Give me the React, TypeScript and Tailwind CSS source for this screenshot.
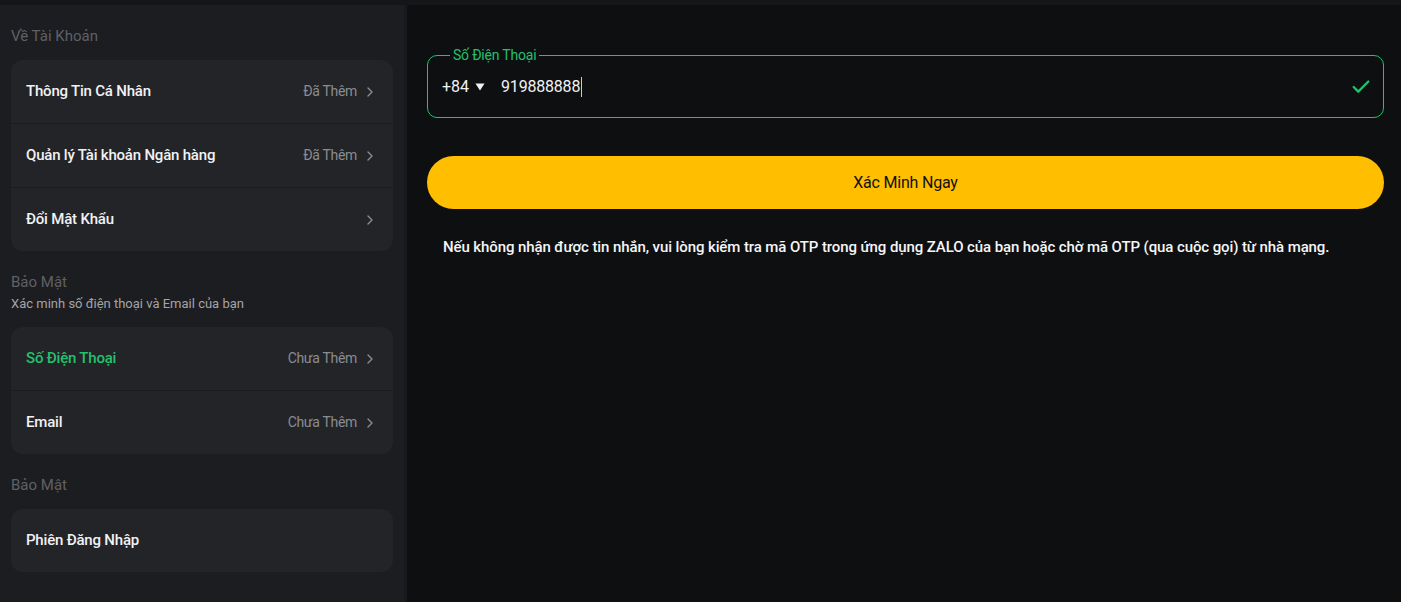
import { ChevronRight, Check } from 'lucide-react'

interface RowItem {
  label: string
  status?: string
  active?: boolean
  chevron?: boolean
}

function Section({ title, subtitle, rows }: { title: string; subtitle?: string; rows: RowItem[] }) {
  return (
    <div>
      <div className="px-[11px] pb-[14px]">
        <div className="text-[15px] leading-[20px] text-[#5f6065]">{title}</div>
        {subtitle && <div className="text-[13px] leading-[18px] text-[#a3a4a8] mt-[3px]">{subtitle}</div>}
      </div>
      <div className="mx-[11px] rounded-[12px] bg-[#232428] overflow-hidden">
        {rows.map((row, idx) => (
          <div
            key={row.label}
            className={`flex items-center pl-[15px] pr-[15px] ${idx > 0 ? 'h-[64px] border-t border-[#1b1c1f]' : 'h-[63px]'}`}
          >
            <span className={`flex-1 text-[15px] font-medium tracking-[-0.2px] ${row.active ? 'text-[#22c16c]' : 'text-[#f1f2f4]'}`}>
              {row.label}
            </span>
            {row.status && <span className="text-[14px] text-[#8b8c91] tracking-[-0.3px] mr-[5px]">{row.status}</span>}
            {row.chevron && <ChevronRight size={16} strokeWidth={2} className="text-[#8b8c91]" />}
          </div>
        ))}
      </div>
    </div>
  )
}

export default function App() {
  return (
    <div className="w-[1401px] h-[602px] flex flex-col bg-[#0e0f11] overflow-hidden" style={{ fontFamily: 'Roboto, "Noto Sans", sans-serif' }}>
      <div className="h-[5px] bg-[#151618] shrink-0" />
      <div className="flex flex-1 min-h-0">
        {/* Sidebar */}
        <div className="w-[404px] bg-[#1c1d20] pt-[21px] shrink-0 flex flex-col">
          <Section
            title="Về Tài Khoản"
            rows={[
              { label: 'Thông Tin Cá Nhân', status: 'Đã Thêm', chevron: true },
              { label: 'Quản lý Tài khoản Ngân hàng', status: 'Đã Thêm', chevron: true },
              { label: 'Đổi Mật Khẩu', chevron: true },
            ]}
          />
          <div className="h-[21px]" />
          <Section
            title="Bảo Mật"
            subtitle="Xác minh số điện thoại và Email của bạn"
            rows={[
              { label: 'Số Điện Thoại', status: 'Chưa Thêm', active: true, chevron: true },
              { label: 'Email', status: 'Chưa Thêm', chevron: true },
            ]}
          />
          <div className="h-[21px]" />
          <Section title="Bảo Mật" rows={[{ label: 'Phiên Đăng Nhập' }]} />
        </div>
        <div className="w-[3px] bg-[#18191c] shrink-0" />

        {/* Main */}
        <div className="flex-1 pl-[20px] pr-[17px] pt-[50px]">
          <div className="relative border border-[#22c16c] rounded-[10px] h-[63px] flex items-center pl-[14px] pr-[11px]">
            <span className="absolute left-[22px] -top-[9px] px-[3px] bg-[#0e0f11] text-[14px] leading-[16px] text-[#22c16c] tracking-[-0.2px]">
              Số Điện Thoại
            </span>
            <span className="text-[16px] text-[#f1f2f4]">+84</span>
            <svg width="10" height="8" viewBox="0 0 10 8" className="ml-[6px]">
              <path d="M0.5 0.5 H9.5 L5 7.5 Z" fill="#f1f2f4" />
            </svg>
            <span className="ml-[16px] text-[16px] text-[#f1f2f4] tracking-[-0.2px]">919888888</span>
            <span className="w-[1px] h-[20px] bg-[#c9cacc] ml-[1px]" />
            <span className="flex-1" />
            <Check size={22} strokeWidth={2.5} className="text-[#22c16c]" />
          </div>

          <button className="mt-[38px] w-full h-[53px] rounded-full bg-[#ffbe00] text-[16px] text-[#111] flex items-center justify-center tracking-[-0.2px]">
            Xác Minh Ngay
          </button>

          <p className="mt-[27px] pl-[16px] text-[15px] font-medium text-[#f4f5f6] tracking-[-0.1px]">
            Nếu không nhận được tin nhắn, vui lòng kiểm tra mã OTP trong ứng dụng ZALO của bạn hoặc chờ mã OTP (qua cuộc gọi) từ nhà mạng.
          </p>
        </div>
      </div>
    </div>
  )
}
